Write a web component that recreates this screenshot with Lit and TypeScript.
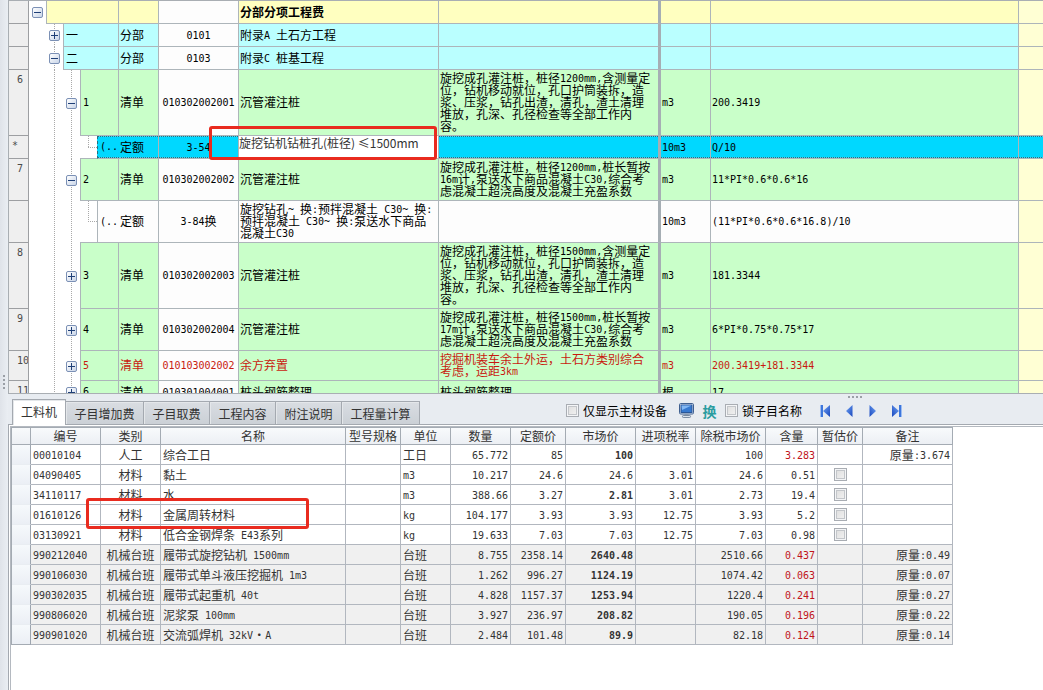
import { LitElement, html, css, svg, nothing } from "lit";
import { customElement, property, state } from "lit/decorators.js";
import { classMap } from "lit/directives/class-map.js";

/** Sets Latin runs in the half-width face, so they take half a CJK character each. */
const mixed = (text: string) =>
  text
    .split(/([\x20-\x7e]+)/)
    .map((part, i) => (i % 2 ? html`<span class="half">${part}</span>` : part));

const sharedStyles = css`
  * {
    box-sizing: border-box;
  }
  .half {
    font-family: "DejaVu Sans Mono", "Liberation Mono", monospace;
    font-size: 10px;
    line-height: 0;
    vertical-align: 1px;
  }
  table {
    border-collapse: separate;
    border-spacing: 0;
    table-layout: fixed;
  }
  button {
    font: inherit;
    color: inherit;
    padding: 0;
    border: 0;
    background: none;
    display: block;
  }
  input[type="checkbox"] {
    appearance: none;
    display: block;
    width: 13px;
    height: 13px;
    margin: 0;
    flex: none;
    border: 1px solid #a9adb3;
    background: linear-gradient(135deg, #dcdcdc, #f4f4f4);
    box-shadow: inset 0 0 0 1px #f4f5f7, inset 0 0 0 2px #c3c6ca;
  }
  input[type="checkbox"]:checked {
    background: #3c6fc4;
  }
`;

type Kind = "root" | "section" | "item" | "quota" | "selected";

interface BillRow {
  head: string;
  level: number;
  kind: Kind;
  open?: boolean;
  label: string;
  type: string;
  code: string;
  name: string;
  feature: string;
  unit: string;
  formula: string;
  alert?: boolean;
}

const bore = (d: number) =>
  `旋挖成孔灌注桩，桩径${d}mm,含测量定\n位，钻机移动就位，孔口护筒装拆，造\n浆、压浆，钻孔出渣，清孔，渣土清理\n堆放，孔深、孔径检查等全部工作内\n容。`;
const pour = (d: number, len: number) =>
  `旋挖成孔灌注桩，桩径${d}mm,桩长暂按\n${len}m计,泵送水下商品混凝土C30,综合考\n虑混凝土超浇高度及混凝土充盈系数`;

const BILL: BillRow[] = [
  { head: "", level: 0, kind: "root", open: true, label: "", type: "", code: "", name: "分部分项工程费", feature: "", unit: "", formula: "" },
  { head: "", level: 1, kind: "section", open: false, label: "一", type: "分部", code: "0101", name: "附录A 土石方工程", feature: "", unit: "", formula: "" },
  { head: "", level: 1, kind: "section", open: true, label: "二", type: "分部", code: "0103", name: "附录C 桩基工程", feature: "", unit: "", formula: "" },
  { head: "6", level: 2, kind: "item", open: true, label: "1", type: "清单", code: "010302002001", name: "沉管灌注桩", feature: bore(1200), unit: "m3", formula: "200.3419" },
  { head: "*", level: 3, kind: "selected", label: "(..", type: "定额", code: "3-54", name: "旋挖钻机钻桩孔(桩径) ≤1500mm", feature: "", unit: "10m3", formula: "Q/10" },
  { head: "7", level: 2, kind: "item", open: true, label: "2", type: "清单", code: "010302002002", name: "沉管灌注桩", feature: pour(1200, 16), unit: "m3", formula: "11*PI*0.6*0.6*16" },
  { head: "", level: 3, kind: "quota", label: "(..", type: "定额", code: "3-84换", name: "旋挖钻孔~ 换:预拌混凝土 C30~ 换:\n预拌混凝土 C30~ 换:泵送水下商品\n混凝土C30", feature: "", unit: "10m3", formula: "(11*PI*0.6*0.6*16.8)/10" },
  { head: "8", level: 2, kind: "item", open: false, label: "3", type: "清单", code: "010302002003", name: "沉管灌注桩", feature: bore(1500), unit: "m3", formula: "181.3344" },
  { head: "9", level: 2, kind: "item", open: false, label: "4", type: "清单", code: "010302002004", name: "沉管灌注桩", feature: pour(1500, 17), unit: "m3", formula: "6*PI*0.75*0.75*17" },
  { head: "10", level: 2, kind: "item", open: false, label: "5", type: "清单", code: "010103002002", name: "余方弃置", feature: "挖掘机装车余土外运，土石方类别综合\n考虑，运距3km", unit: "m3", formula: "200.3419+181.3344", alert: true },
  { head: "11", level: 2, kind: "item", open: false, label: "6", type: "清单", code: "010301004001", name: "桩头钢筋整理", feature: "桩头钢筋整理", unit: "根", formula: "17" },
];

@customElement("bill-grid")
export class BillGrid extends LitElement {
  static styles = [
    sharedStyles,
    css`
      :host {
        display: block;
        overflow: hidden;
        border: solid #a9aeb3;
        border-width: 1px 0 1px 1px;
        background: #fff;
      }
      table {
        width: 100%;
      }
      .c-head { width: 20px; }
      .c-tree { width: 90px; }
      .c-type { width: 40px; }
      .c-code { width: 80px; }
      .c-name { width: 200px; }
      .c-feature { width: 222px; }
      .c-unit { width: 50px; }
      .c-formula { width: 308px; }
      tr {
        height: 23px;
      }
      th,
      td {
        padding: 2px 1px 3px;
        border: solid #adb5ba;
        border-width: 0 1px 1px 0;
        line-height: 12px;
        font-weight: normal;
        text-align: left;
        white-space: pre;
        vertical-align: middle;
      }
      th {
        background: #efefef;
        border-color: #9d9fa2;
        color: #4a4a4a;
        padding: 3px 0 3px 8px;
        vertical-align: top;
        overflow: hidden;
      }
      .selected th {
        padding-left: 3px;
      }
      .tree {
        height: 1px;
        padding: 0;
        border-bottom: 0;
      }
      .branch {
        display: flex;
        height: 100%;
      }
      .slot {
        width: 17px;
        flex: none;
        display: flex;
        align-items: center;
        padding-left: 3px;
        background-repeat: no-repeat;
      }
      .guide {
        background-image: repeating-linear-gradient(#a9a9a9 0 1px, transparent 1px 2px);
        background-position: 8px 0;
        background-size: 1px 100%;
      }
      .elbow {
        border-bottom: 1px solid #adb5ba;
        background-image: repeating-linear-gradient(#a9a9a9 0 1px, transparent 1px 2px),
          repeating-linear-gradient(90deg, #a9a9a9 0 1px, transparent 1px 2px);
        background-position: 8px 0, 8px 50%;
        background-size: 1px 50%, 9px 1px;
      }
      .label {
        flex: 1;
        display: flex;
        align-items: center;
        padding: 0 2px;
        border: solid #adb5ba;
        border-width: 0 0 1px 1px;
      }
      .toggle {
        width: 11px;
        height: 11px;
        display: grid;
        place-items: center;
        border: 1px solid #7b90b5;
        border-radius: 2px;
        background: linear-gradient(135deg, #fff, #c9d5e8);
      }
      .toggle svg {
        display: block;
      }
      .code {
        text-align: center;
        background: #fdfdfd;
      }
      .feature {
        border-right: 3px solid #a6aeb4;
      }
      .rest {
        background: #ffffd4;
        border-right: 0;
      }
      .root .fill { background: #ffffc0; }
      .section .fill { background: #baffff; }
      .item .fill { background: #c9ffc9; }
      .quota .fill { background: #fdfdfd; }
      .root .name {
        font-weight: bold;
      }
      .selected .fill,
      .selected .code,
      .selected .rest {
        background: repeating-linear-gradient(90deg, #24707f 0 1px, #3fd9f5 1px 2px) 0 0 / 100% 1px no-repeat,
          repeating-linear-gradient(90deg, #24707f 0 1px, #3fd9f5 1px 2px) 0 100% / 100% 1px no-repeat,
          #00d8ff;
      }
      .selected .label {
        border-left: 1px dashed #24707f;
      }
      .selected .name {
        position: relative;
        padding: 0;
        background: #fff;
        vertical-align: top;
      }
      .editor {
        display: block;
        width: 100%;
        height: 14px;
        padding: 0;
        border: 0;
        outline: 0;
        background: #fff;
        color: #333;
        font: 12px/14px "Noto Sans CJK SC", sans-serif;
      }
      .marker {
        position: absolute;
        inset: -10px 1px -2px -30px;
        border: 3px solid #e92b1f;
        border-radius: 3px;
        pointer-events: none;
      }
      .alert td {
        color: #c81a10;
      }
    `,
  ];

  private slots(row: BillRow) {
    return Array.from({ length: row.level + 1 }, (_, i) => {
      if (i === row.level && row.open !== undefined) {
        return html`<span class=${classMap({ slot: true, guide: i > 0 })}>
          <button class="toggle" aria-label=${row.open ? "收起" : "展开"}>
            <svg width="7" height="7" viewBox="0 0 7 7">
              <path d=${row.open ? "M0 3.5H7" : "M0 3.5H7M3.5 0V7"} stroke="#1f3f77" fill="none" />
            </svg>
          </button>
        </span>`;
      }
      return html`<span class=${classMap({ slot: true, guide: i > 0 && i < row.level, elbow: i > 0 && i === row.level })}></span>`;
    });
  }

  render() {
    return html`<table>
      <colgroup>
        <col class="c-head" /><col class="c-tree" /><col class="c-type" /><col class="c-code" />
        <col class="c-name" /><col class="c-feature" /><col class="c-unit" /><col class="c-formula" /><col />
      </colgroup>
      <tbody>
        ${BILL.map(
          (r) => html`<tr class=${classMap({ [r.kind]: true, alert: !!r.alert })}>
            <th scope="row">${mixed(r.head)}</th>
            <td class="tree"><div class="branch">${this.slots(r)}<span class="label fill">${mixed(r.label)}</span></div></td>
            <td class="fill">${mixed(r.type)}</td>
            <td class="code">${mixed(r.code)}</td>
            <td class="name fill">${r.kind === "selected"
              ? html`<input class="editor" type="text" aria-label="名称" .value=${r.name} /><span class="marker"></span>`
              : mixed(r.name)}</td>
            <td class="feature fill">${mixed(r.feature)}</td>
            <td class="fill">${mixed(r.unit)}</td>
            <td class="fill">${mixed(r.formula)}</td>
            <td class="rest"></td>
          </tr>`
        )}
      </tbody>
    </table>`;
  }
}

interface Resource {
  code: string;
  kind: string;
  name: string;
  unit: string;
  qty: string;
  quota: string;
  market: string;
  tax: string;
  net: string;
  content: string;
  note: string;
  bold?: boolean;
  red?: boolean;
}

const machine = (code: string, name: string, qty: string, quota: string, market: string, net: string, content: string, note: string): Resource => ({
  code, kind: "机械台班", name, unit: "台班", qty, quota, market, tax: "", net, content, note: `原量:${note}`, bold: true, red: true,
});
const material = (code: string, name: string, unit: string, qty: string, quota: string, market: string, tax: string, net: string, content: string, bold = false): Resource => ({
  code, kind: "材料", name, unit, qty, quota, market, tax, net, content, note: "", bold,
});

const RESOURCES: Resource[] = [
  { code: "00010104", kind: "人工", name: "综合工日", unit: "工日", qty: "65.772", quota: "85", market: "100", tax: "", net: "100", content: "3.283", note: "原量:3.674", bold: true, red: true },
  material("04090405", "黏土", "m3", "10.217", "24.6", "24.6", "3.01", "24.6", "0.51"),
  material("34110117", "水", "m3", "388.66", "3.27", "2.81", "3.01", "2.73", "19.4", true),
  material("01610126", "金属周转材料", "kg", "104.177", "3.93", "3.93", "12.75", "3.93", "5.2"),
  material("03130921", "低合金钢焊条 E43系列", "kg", "19.633", "7.03", "7.03", "12.75", "7.03", "0.98"),
  machine("990212040", "履带式旋挖钻机 1500mm", "8.755", "2358.14", "2640.48", "2510.66", "0.437", "0.49"),
  machine("990106030", "履带式单斗液压挖掘机 1m3", "1.262", "996.27", "1124.19", "1074.42", "0.063", "0.07"),
  machine("990302035", "履带式起重机 40t", "4.828", "1157.37", "1253.94", "1220.4", "0.241", "0.27"),
  machine("990806020", "泥浆泵 100mm", "3.927", "236.97", "208.82", "190.05", "0.196", "0.22"),
  machine("990901020", "交流弧焊机 32kV・A", "2.484", "101.48", "89.9", "82.18", "0.124", "0.14"),
];

const HEADINGS = ["", "编号", "类别", "名称", "型号规格", "单位", "数量", "定额价", "市场价", "进项税率", "除税市场价", "含量", "暂估价", "备注"];
const WIDTHS = [19, 70, 60, 185, 55, 50, 60, 55, 70, 60, 70, 52, 45, 90];

@customElement("resource-grid")
export class ResourceGrid extends LitElement {
  static styles = [
    sharedStyles,
    css`
      :host {
        display: block;
        color: #333;
      }
      table {
        width: 942px;
        border: solid #a4abb3;
        border-width: 1px 0 0 1px;
      }
      th,
      td {
        height: 20px;
        padding: 0 2px;
        border: solid #b2b7bf;
        border-width: 0 1px 1px 0;
        line-height: 18px;
        font-weight: normal;
        white-space: pre;
        text-align: right;
      }
      thead th {
        height: 17px;
        padding: 0;
        line-height: 16px;
        text-align: center;
        background: linear-gradient(#f8fafc, #eceff4);
        border-color: #a4abb3;
      }
      tbody th {
        background: linear-gradient(#f6f9fc, #ebeff5);
        border-right-color: #9da5af;
        border-bottom-color: #e9edf2;
      }
      tr:last-child th {
        border-bottom-color: #a4abb3;
      }
      .left {
        text-align: left;
      }
      .center {
        text-align: center;
      }
      .machine td {
        background: #f0f0f0;
      }
      .bold {
        font-weight: bold;
      }
      .red {
        color: #c0141a;
      }
      input[type="checkbox"] {
        margin: 0 auto;
      }
      .marked {
        position: relative;
      }
      .marker {
        position: absolute;
        inset: -7px -149px -5px -15px;
        border: 3px solid #e92b1f;
        border-radius: 3px;
        pointer-events: none;
      }
    `,
  ];

  render() {
    return html`<table>
      <colgroup>${WIDTHS.map((w) => html`<col style="width:${w}px" />`)}</colgroup>
      <thead>
        <tr>${HEADINGS.map((h) => html`<th scope="col">${h}</th>`)}</tr>
      </thead>
      <tbody>
        ${RESOURCES.map((r) => {
          const marked = r.code === "01610126";
          return html`<tr class=${classMap({ machine: r.kind === "机械台班" })}>
            <th scope="row"></th>
            <td class="left">${mixed(r.code)}</td>
            <td class=${classMap({ center: true, marked })}>${r.kind}${marked ? html`<span class="marker"></span>` : nothing}</td>
            <td class="left">${mixed(r.name)}</td>
            <td></td>
            <td class="left">${mixed(r.unit)}</td>
            <td>${mixed(r.qty)}</td>
            <td>${mixed(r.quota)}</td>
            <td class=${classMap({ bold: !!r.bold })}>${mixed(r.market)}</td>
            <td>${mixed(r.tax)}</td>
            <td>${mixed(r.net)}</td>
            <td class=${classMap({ red: !!r.red })}>${mixed(r.content)}</td>
            <td>${r.kind === "材料" ? html`<input type="checkbox" aria-label="暂估价 ${r.name}" />` : nothing}</td>
            <td>${mixed(r.note)}</td>
          </tr>`;
        })}
      </tbody>
    </table>`;
  }
}

const TABS = ["工料机", "子目增加费", "子目取费", "工程内容", "附注说明", "工程量计算"];

@customElement("detail-bar")
export class DetailBar extends LitElement {
  @property({ type: Number }) active = 0;

  static styles = [
    sharedStyles,
    css`
      :host {
        display: flex;
        align-items: stretch;
        height: 25px;
        padding-left: 4px;
        line-height: 18px;
        white-space: nowrap;
      }
      .tabs {
        display: flex;
        align-items: flex-end;
      }
      .tab {
        height: 23px;
        padding: 2px 8px 0;
        color: #333;
        border: 1px solid #a4a9b0;
        border-width: 1px 1px 0 0;
        background: linear-gradient(#d9dde2, #cbd0d6);
        box-shadow: inset 1px 1px #e4e7ea;
        flex: none;
      }
      .tab + .tab {
        width: 66px;
        padding: 2px 0 0;
      }
      .tab + .tab.wide {
        width: 78px;
      }
      .tab.on {
        height: 26px;
        margin-bottom: -1px;
        width: 54px;
        border-left-width: 1px;
        background: #fff;
        padding: 1px 0 2px;
        position: relative;
        z-index: 1;
      }
      .tools {
        display: flex;
        align-items: center;
        margin-left: 146px;
        height: 23px;
        color: #000;
      }
      .check {
        display: flex;
        align-items: center;
        gap: 4px;
      }
      .screen {
        margin: 0 8px 0 12px;
      }
      .swap {
        width: 15px;
        margin-right: 8px;
        font-size: 14px;
        font-weight: bold;
        color: #2a9ca0;
      }
      .nav {
        display: flex;
        align-items: center;
        gap: 10px;
        margin-left: 16px;
      }
      .nav svg,
      .screen svg {
        display: block;
      }
    `,
  ];

  private select(i: number) {
    this.dispatchEvent(new CustomEvent("tab-change", { detail: i }));
  }

  private arrow(kind: "first" | "prev" | "next" | "last") {
    const flip = kind === "next" || kind === "last";
    const end = kind === "first" || kind === "last";
    const shape = svg`<g transform=${flip ? "translate(14 0) scale(-1 1)" : ""}>
      ${end ? svg`<path d="M2 1H5V13H2Z" fill="#3d76dc" /><path d="M2.5 1V13" stroke="#9dbdf2" />` : nothing}
      <path d=${end ? "M12 1V13L5 7Z" : "M10.5 1V13L4 7Z"} fill="url(#blue)" />
    </g>`;
    return html`<svg width="14" height="14" viewBox="0 0 14 14">
      <defs><linearGradient id="blue" x1="0" y1="0" x2="1" y2="1"><stop offset="0" stop-color="#74a6f5" /><stop offset="1" stop-color="#1746bd" /></linearGradient></defs>
      ${shape}
    </svg>`;
  }

  render() {
    return html`
      <div class="tabs" role="tablist">
        ${TABS.map(
          (t, i) => html`<button
            role="tab"
            aria-selected=${i === this.active}
            class=${classMap({ tab: true, on: i === this.active, wide: t.length > 4 })}
            @click=${() => this.select(i)}
          >${t}</button>`
        )}
      </div>
      <div class="tools">
        <label class="check"><input type="checkbox" />仅显示主材设备</label>
        <button class="screen" aria-label="设备">
          <svg width="15" height="15" viewBox="0 0 15 15">
            <rect x="0.5" y="0.5" width="14" height="10.5" rx="1.2" fill="#e2ebf6" stroke="#3f5f8f" />
            <rect x="2" y="2" width="11" height="7.5" fill="#3679cf" stroke="#2a5798" />
            <path d="M2.5 2.5H12.5L3 7Z" fill="#83b8f3" />
            <path d="M5.5 11H9.5V12.5H5.5Z" fill="#8998ac" />
            <rect x="3.5" y="12.5" width="8" height="2" rx="0.8" fill="#dce4ee" stroke="#63768f" stroke-width="0.8" />
          </svg>
        </button>
        <button class="swap">换</button>
        <label class="check"><input type="checkbox" />锁子目名称</label>
        <div class="nav">
          <button aria-label="首条">${this.arrow("first")}</button>
          <button aria-label="上一条">${this.arrow("prev")}</button>
          <button aria-label="下一条">${this.arrow("next")}</button>
          <button aria-label="末条">${this.arrow("last")}</button>
        </div>
      </div>
    `;
  }
}

@customElement("app-root")
export class AppRoot extends LitElement {
  @state() private tab = 0;

  static styles = [
    sharedStyles,
    css`
      :host {
        display: grid;
        grid-template-columns: 8px minmax(0, 1fr);
        grid-template-rows: minmax(0, 1fr);
        height: 100vh;
        overflow: hidden;
        background: #e8ecf1;
        color: #000;
        font: 12px/12px "Noto Sans CJK SC", "Liberation Sans", sans-serif;
      }
      .side {
        display: flex;
        flex-direction: column;
        align-items: center;
        gap: 2px;
        background: linear-gradient(90deg, #dfe3e9, #eaeef3);
      }
      .side::before {
        content: "";
        flex: 5;
      }
      .side::after {
        content: "";
        flex: 4;
      }
      .dot {
        width: 2px;
        height: 2px;
        background: #9a9fa6;
      }
      .work {
        display: grid;
        grid-template-rows: minmax(0, 4fr) minmax(0, 3fr);
        min-width: 0;
      }
      .detail {
        display: flex;
        flex-direction: column;
        min-height: 0;
      }
      .splitter {
        display: flex;
        flex: none;
        justify-content: flex-end;
        gap: 2px;
        height: 5px;
        padding: 2px 181px 0 0;
      }
      detail-bar {
        flex: none;
      }
      .frame {
        flex: 1;
        min-height: 0;
        padding: 1px 0 0 1px;
        border: solid #a4a9b0;
        border-width: 1px 0 0 1px;
        background: #fff;
      }
      .sheet {
        height: 100%;
        border: solid #b4b9c0;
        border-width: 1px 0 0 1px;
      }
    `,
  ];

  render() {
    const dots = [0, 1, 2, 3].map(() => html`<span class="dot"></span>`);
    return html`
      <div class="side">${dots}</div>
      <main class="work">
        <bill-grid></bill-grid>
        <section class="detail">
          <div class="splitter">${dots}</div>
          <detail-bar .active=${this.tab} @tab-change=${(e: CustomEvent<number>) => (this.tab = e.detail)}></detail-bar>
          <div class="frame"><div class="sheet"><resource-grid></resource-grid></div></div>
        </section>
      </main>
    `;
  }
}
